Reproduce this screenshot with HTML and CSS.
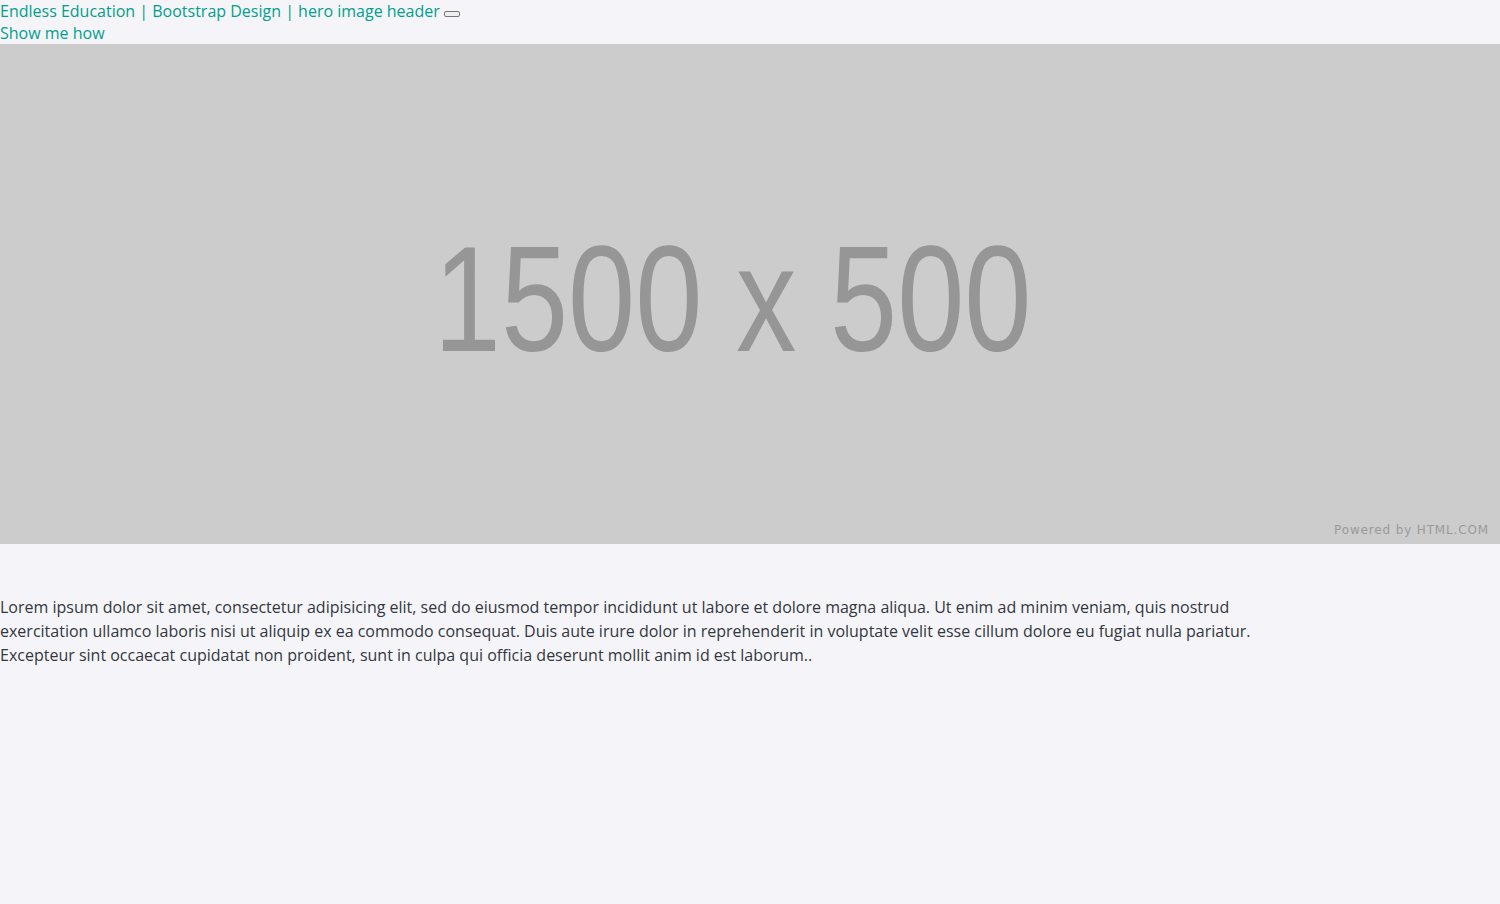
FILE: index.html
```html
<!DOCTYPE html>
<html lang="en">
<head>
<meta charset="utf-8">
<title>Endless Education | Bootstrap Design | hero image header</title>
<link rel="stylesheet" href="styles.css">
</head>
<body>
<nav class="nav">
  <a class="brand" href="#">Endless Education | Bootstrap Design | hero image header</a>
  <button class="toggler" type="button"></button>
  <div class="nav-links"><a href="#">Show me how</a></div>
</nav>
<header class="hero">
  <div class="hero-size">1500 x 500</div>
  <div class="powered">Powered by HTML.COM</div>
</header>
<main class="content">
  <p>Lorem ipsum dolor sit amet, consectetur adipisicing elit, sed do eiusmod tempor incididunt ut labore et dolore magna aliqua. Ut enim ad minim veniam, quis nostrud exercitation ullamco laboris nisi ut aliquip ex ea commodo consequat. Duis aute irure dolor in reprehenderit in voluptate velit esse cillum dolore eu fugiat nulla pariatur. Excepteur sint occaecat cupidatat non proident, sunt in culpa qui officia deserunt mollit anim id est laborum..</p>
</main>
</body>
</html>
```
FILE: styles.css
```css
html, body {
  margin: 0;
  padding: 0;
}
body {
  background: #f5f5f9;
  font-family: "Open Sans", "Liberation Sans", sans-serif;
  font-size: 16px;
  color: #333740;
}
a {
  color: #00a08c;
  text-decoration: none;
}
.nav {
  line-height: 22px;
}
.brand {
  display: inline;
}
.toggler {
  display: inline-block;
  vertical-align: middle;
  margin: 0;
  padding: 1px 6px;
  height: 6px;
  width: 16px;
  border: 1px solid #777;
  border-radius: 2px;
  background: #efefef;
  box-sizing: border-box;
  position: relative;
  top: 1px;
}
.nav-links {
  line-height: 22px;
}
.hero {
  position: relative;
  height: 500px;
  background: #cccccc;
  display: flex;
  align-items: center;
  justify-content: center;
  overflow: hidden;
}
.hero-size {
  font-family: "Liberation Sans", Arial, sans-serif;
  font-size: 151px;
  color: #969696;
  transform: scaleX(0.8);
  white-space: nowrap;
  line-height: 1;
  margin-top: 8px;
  margin-left: -35px;
}
.powered {
  position: absolute;
  right: 11px;
  bottom: 7px;
  font-family: "DejaVu Sans", Verdana, sans-serif;
  font-size: 12px;
  letter-spacing: 0.85px;
  color: #9a9a9a;
}
.content {
  padding-top: 51px;
}
.content p {
  margin: 0;
  max-width: 1260px;
  line-height: 24px;
}
```
